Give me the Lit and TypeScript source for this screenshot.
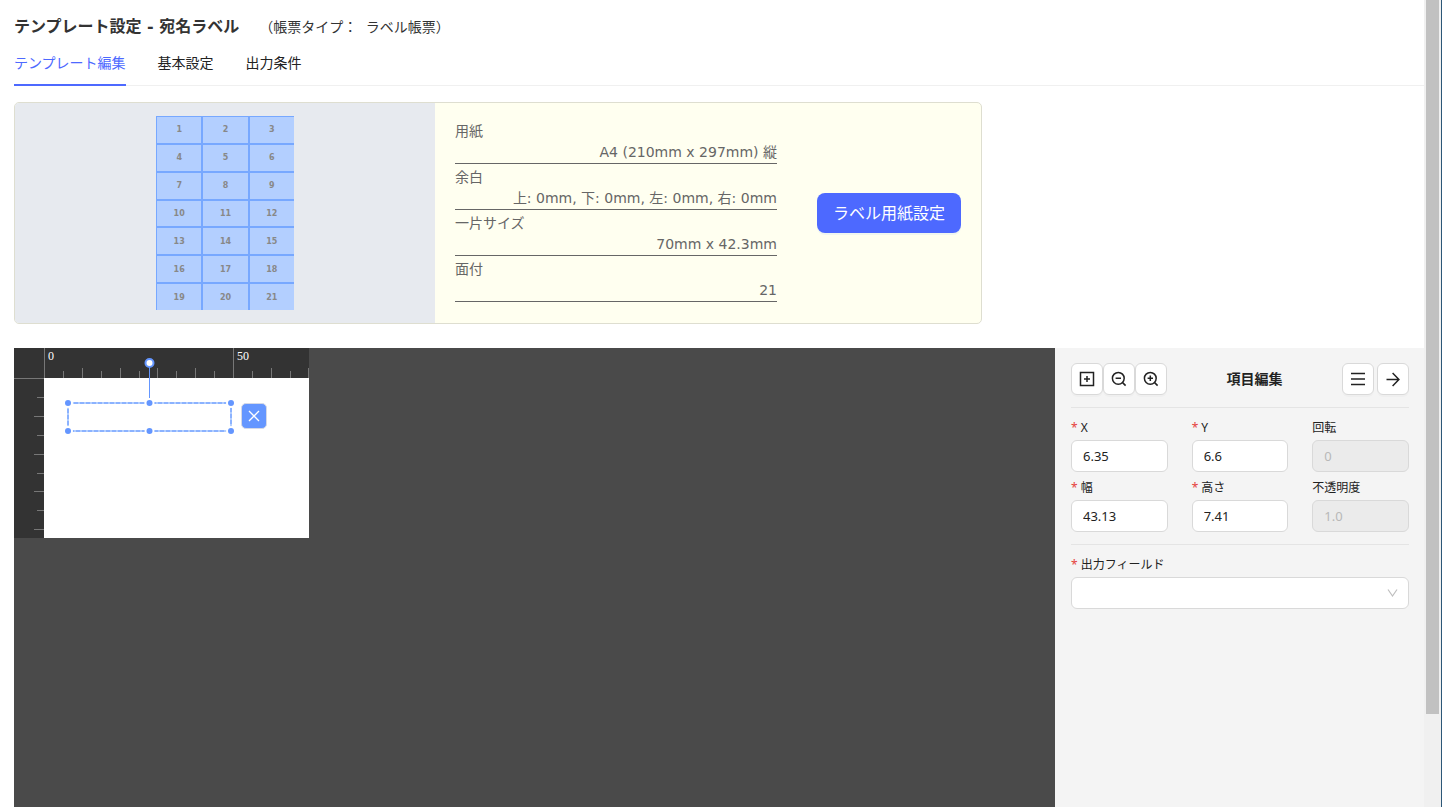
import { LitElement, html, svg, css } from "lit";
import { customElement, property, state } from "lit/decorators.js";
import { classMap } from "lit/directives/class-map.js";

const PX_PER_MM = 3.78;
const RULER = 30;

const icons = {
  plusSquare: svg`<rect x="1.5" y="1.5" width="13" height="13" /><path d="M8 5v6M5 8h6" />`,
  zoomOut: svg`<circle cx="7.3" cy="7.3" r="5.9" /><path d="M11.6 11.6l3 3M4.6 7.3h5.4" />`,
  zoomIn: svg`<circle cx="7.3" cy="7.3" r="5.9" /><path d="M11.6 11.6l3 3M4.6 7.3h5.4M7.3 4.6v5.4" />`,
  menu: svg`<path d="M1 2.5h14M1 8h14M1 13.5h14" />`,
  arrow: svg`<path d="M1.5 8.5h12.6M7.6 2l6.3 6.5-6.3 6.5" />`,
};

@customElement("icon-button")
class IconButton extends LitElement {
  @property() icon: keyof typeof icons = "menu";
  @property() name = "";

  static styles = css`
    :host {
      display: block;
    }
    .button {
      display: grid;
      place-items: center;
      width: 32px;
      height: 32px;
      padding: 0;
      background: #fff;
      border: 1px solid #d9d9d9;
      border-radius: 6px;
      box-shadow: 0 2px 0 rgba(0, 0, 0, 0.02);
      cursor: pointer;
    }
    .glyph {
      display: block;
      fill: none;
      stroke: #222;
      stroke-width: 1.5;
    }
  `;

  render() {
    return html`<button class="button" type="button" aria-label=${this.name}>
      <svg class="glyph" width="16" height="16" viewBox="0 0 16 16">${icons[this.icon]}</svg>
    </button>`;
  }
}

@customElement("label-sheet")
class LabelSheet extends LitElement {
  @property({ type: Number }) count = 21;

  static styles = css`
    :host {
      display: block;
    }
    .sheet {
      display: grid;
      grid-template-columns: repeat(3, 1fr);
      grid-auto-rows: 1fr;
      gap: 2px;
      width: 138px;
      height: 194px;
      box-sizing: border-box;
      padding: 1px 0 0 1px;
      background: #77a8ff;
      font: bold 8px/10px "DejaVu Sans", sans-serif;
      color: #888;
    }
    .cell {
      display: grid;
      place-items: center;
      padding-top: 1px;
      background: #b3cfff;
    }
  `;

  render() {
    return html`<div class="sheet">
      ${Array.from({ length: this.count }, (_, i) => html`<div class="cell">${i + 1}</div>`)}
    </div>`;
  }
}

@customElement("label-canvas")
class LabelCanvas extends LitElement {
  static styles = css`
    :host {
      display: block;
    }
    .stage {
      position: relative;
      width: 295px;
      height: 190px;
    }
    .drawing {
      display: block;
    }
    .ruler {
      fill: #333;
    }
    .paper,
    .halo,
    .knob {
      fill: #fff;
    }
    .tick {
      stroke: #777;
      fill: none;
    }
    .number {
      font: 12px "Liberation Serif", serif;
      fill: #fff;
    }
    .edge {
      fill: none;
      stroke: #b3cfff;
      stroke-width: 2;
    }
    .dash {
      fill: none;
      stroke: #6496ff;
      stroke-width: 1;
      stroke-dasharray: 4 2;
    }
    .dot {
      fill: #6496ff;
    }
    .stem {
      stroke: #6496ff;
    }
    .knob {
      stroke: #6496ff;
      stroke-width: 2;
    }
    .remove {
      position: absolute;
      left: 227px;
      top: 55px;
      display: grid;
      place-items: center;
      width: 26px;
      height: 26px;
      padding: 0;
      border: 1px solid #d5d9e6;
      border-radius: 5px;
      background: #6496ff;
      cursor: pointer;
    }
    .cross {
      display: block;
      stroke: #fff;
      stroke-width: 1.3;
    }
  `;

  private ticks(length: number, vertical: boolean) {
    const lines = [];
    for (let mm = 0; RULER + mm * PX_PER_MM < length; mm += 5) {
      const at = Math.min(Math.round(RULER + mm * PX_PER_MM), length - 1) + 0.5;
      const size = mm % 50 === 0 ? RULER : mm % 10 === 0 ? 10 : 7;
      lines.push(
        vertical
          ? svg`<path class="tick" d="M${RULER - size} ${at}H${RULER}" />`
          : svg`<path class="tick" d="M${at} ${RULER - size}V${RULER}" />`
      );
    }
    return lines;
  }

  render() {
    const box = { l: 54, t: 55, r: 217, b: 83, m: 135.5 };
    const dots = [box.l, box.m, box.r].flatMap((x) => [box.t, box.b].map((y) => [x, y]));
    return html`<div class="stage">
      <svg class="drawing" width="295" height="190" viewBox="0 0 295 190">
        <rect class="ruler" width="295" height="190" />
        <rect class="paper" x="30" y="30" width="265" height="160" />
        ${this.ticks(295, false)} ${this.ticks(190, true)}
        <text class="number" x="34" y="12">0</text>
        <text class="number" x="223" y="12">50</text>
        <rect class="edge" x=${box.l} y=${box.t} width=${box.r - box.l} height=${box.b - box.t} />
        <rect class="dash" x=${box.l} y=${box.t} width=${box.r - box.l} height=${box.b - box.t} />
        <path class="stem" d="M135.5 15V50" />
        ${dots.map(
          ([x, y]) => svg`<circle class="halo" cx=${x} cy=${y} r="5" /><circle class="dot" cx=${x} cy=${y} r="3" />`
        )}
        <circle class="knob" cx="135.5" cy="15" r="4" />
      </svg>
      <button class="remove" type="button" aria-label="削除">
        <svg class="cross" width="12" height="12" viewBox="0 0 12 12"><path d="M1 1l10 10M11 1L1 11" /></svg>
      </button>
    </div>`;
  }
}

@customElement("item-panel")
class ItemPanel extends LitElement {
  static styles = css`
    :host {
      display: block;
      box-sizing: border-box;
      padding: 15px 15px 0 16px;
      background: #f4f4f4;
      color: #222;
    }
    .toolbar {
      display: flex;
      align-items: center;
      justify-content: space-between;
      padding-bottom: 12px;
      border-bottom: 1px solid #e4e4e4;
    }
    .group {
      display: flex;
    }
    .spaced {
      gap: 3px;
    }
    .heading {
      margin: 0;
      font-size: 14px;
      line-height: 20px;
      font-weight: 700;
    }
    .fields {
      display: grid;
      grid-template-columns: repeat(3, minmax(0, 1fr));
      gap: 6px 24px;
      padding: 10px 0 12px;
      border-bottom: 1px solid #e4e4e4;
    }
    .field {
      display: grid;
      gap: 2px;
    }
    .output {
      padding-top: 10px;
    }
    .label {
      font-size: 12px;
      line-height: 20px;
    }
    .required::before {
      content: "*";
      margin-right: 3px;
      color: #e5413c;
    }
    .control {
      box-sizing: border-box;
      width: 100%;
      height: 32px;
      margin: 0;
      padding: 0 11px;
      border: 1px solid #d9d9d9;
      border-radius: 6px;
      background: #fff;
      color: #222;
      font: 13px/20px "Noto Sans", "Noto Sans CJK JP", sans-serif;
    }
    .control:disabled {
      background: #ebebeb;
      color: #b8b8b8;
    }
    .picker {
      display: grid;
      align-items: center;
    }
    .picker > * {
      grid-area: 1 / 1;
    }
    .select {
      appearance: none;
    }
    .chevron {
      justify-self: end;
      margin-right: 11px;
      fill: none;
      stroke: #bfbfbf;
      stroke-width: 1.2;
      pointer-events: none;
    }
  `;

  private fields = [
    { id: "x", label: "X", value: "6.35" },
    { id: "y", label: "Y", value: "6.6" },
    { id: "rotation", label: "回転", value: "0", disabled: true },
    { id: "width", label: "幅", value: "43.13" },
    { id: "height", label: "高さ", value: "7.41" },
    { id: "opacity", label: "不透明度", value: "1.0", disabled: true },
  ];

  render() {
    return html`
      <div class="toolbar">
        <div class="group">
          <icon-button icon="plusSquare" name="追加"></icon-button>
          <icon-button icon="zoomOut" name="縮小"></icon-button>
          <icon-button icon="zoomIn" name="拡大"></icon-button>
        </div>
        <h2 class="heading">項目編集</h2>
        <div class="group spaced">
          <icon-button icon="menu" name="一覧"></icon-button>
          <icon-button icon="arrow" name="次へ"></icon-button>
        </div>
      </div>
      <div class="fields">
        ${this.fields.map(
          (f) => html`<div class="field">
            <label class=${classMap({ label: true, required: !f.disabled })} for=${f.id}>${f.label}</label>
            <input class="control" id=${f.id} .value=${f.value} ?disabled=${!!f.disabled} />
          </div>`
        )}
      </div>
      <div class="field output">
        <label class="label required" for="output">出力フィールド</label>
        <div class="picker">
          <select class="control select" id="output"><option></option></select>
          <svg class="chevron" width="11" height="8" viewBox="0 0 11 8"><path d="M1 .5l4.5 6.5L10 .5" /></svg>
        </div>
      </div>
    `;
  }
}

@customElement("app-root")
class AppRoot extends LitElement {
  @state() private tab = 0;

  private tabs = ["テンプレート編集", "基本設定", "出力条件"];
  private info = [
    ["用紙", "A4 (210mm x 297mm) 縦"],
    ["余白", "上: 0mm, 下: 0mm, 左: 0mm, 右: 0mm"],
    ["一片サイズ", "70mm x 42.3mm"],
    ["面付", "21"],
  ];

  static styles = css`
    :host {
      display: flex;
      height: 100vh;
      overflow: hidden;
      background: #fff;
      color: #222;
      font-family: "Noto Sans", "Noto Sans CJK JP", sans-serif;
      font-size: 14px;
      line-height: 20px;
    }
    .page {
      flex: 1;
      min-width: 0;
      display: flex;
      flex-direction: column;
      padding: 15px 0 0 14px;
    }
    .header {
      display: flex;
      align-items: center;
      gap: 20px;
      color: #333;
      font-family: "DejaVu Sans", "Noto Sans CJK JP", sans-serif;
    }
    .title {
      margin: 0;
      font-size: 16px;
      line-height: 24px;
      font-weight: 700;
    }
    .kind {
      margin-left: 4px;
    }
    .tabs {
      display: flex;
      gap: 32px;
      box-shadow: inset 0 -1px #f0f0f0;
    }
    .tab {
      padding: 14px 0 11px;
      border: 0;
      border-bottom: 2px solid transparent;
      background: none;
      color: inherit;
      font: inherit;
      cursor: pointer;
    }
    .active {
      color: #4d69ff;
      border-color: #4d69ff;
    }
    .card {
      display: flex;
      box-sizing: border-box;
      width: 968px;
      max-width: 100%;
      min-height: 222px;
      margin: 16px 0 24px;
      border: 1px solid #deded0;
      border-radius: 5px;
      overflow: hidden;
      background: #fffff0;
    }
    .preview {
      display: grid;
      place-items: center;
      width: 420px;
      background: #e7eaef;
    }
    .info {
      flex: 1;
      margin: 0;
      padding: 15px 40px 0 20px;
      color: #666;
      font-family: "DejaVu Sans", "Noto Sans CJK JP", sans-serif;
    }
    .row {
      box-sizing: border-box;
      height: 46px;
      padding-top: 3px;
      border-bottom: 1px solid #666;
    }
    .value {
      margin: 1px 0 0;
      text-align: right;
    }
    .action {
      display: flex;
      align-items: center;
      padding-right: 20px;
    }
    .primary {
      height: 40px;
      padding: 0 16px 2px;
      border: 0;
      border-radius: 8px;
      background: #4d69ff;
      box-shadow: 0 2px 0 rgba(5, 95, 255, 0.06);
      color: #fff;
      font: 16px/24px "Noto Sans CJK JP", sans-serif;
      cursor: pointer;
    }
    .editor {
      flex: 1;
      display: flex;
      min-height: 0;
      background: #4a4a4a;
    }
    .workspace {
      flex: 1;
      min-width: 0;
    }
    .panel {
      width: 369px;
    }
    .scrollbar {
      box-sizing: border-box;
      width: 18px;
      padding: 0 2px;
      background: #f0f0f0;
      border-right: 1px solid #2d5878;
    }
    .thumb {
      height: 88.5%;
      background: #c1c1c1;
    }
  `;

  render() {
    return html`
      <main class="page">
        <header class="header">
          <h1 class="title">テンプレート設定 - 宛名ラベル</h1>
          <span>（帳票タイプ： <span class="kind">ラベル帳票）</span></span>
        </header>
        <nav class="tabs" role="tablist">
          ${this.tabs.map(
            (name, i) => html`<button
              type="button"
              role="tab"
              aria-selected=${i === this.tab}
              class=${classMap({ tab: true, active: i === this.tab })}
              @click=${() => (this.tab = i)}
            >${name}</button>`
          )}
        </nav>
        <section class="card">
          <div class="preview"><label-sheet></label-sheet></div>
          <dl class="info">
            ${this.info.map(
              ([name, value]) => html`<div class="row"><dt>${name}</dt><dd class="value">${value}</dd></div>`
            )}
          </dl>
          <div class="action"><button class="primary" type="button">ラベル用紙設定</button></div>
        </section>
        <section class="editor">
          <div class="workspace"><label-canvas></label-canvas></div>
          <item-panel class="panel"></item-panel>
        </section>
      </main>
      <div class="scrollbar"><div class="thumb"></div></div>
    `;
  }
}
